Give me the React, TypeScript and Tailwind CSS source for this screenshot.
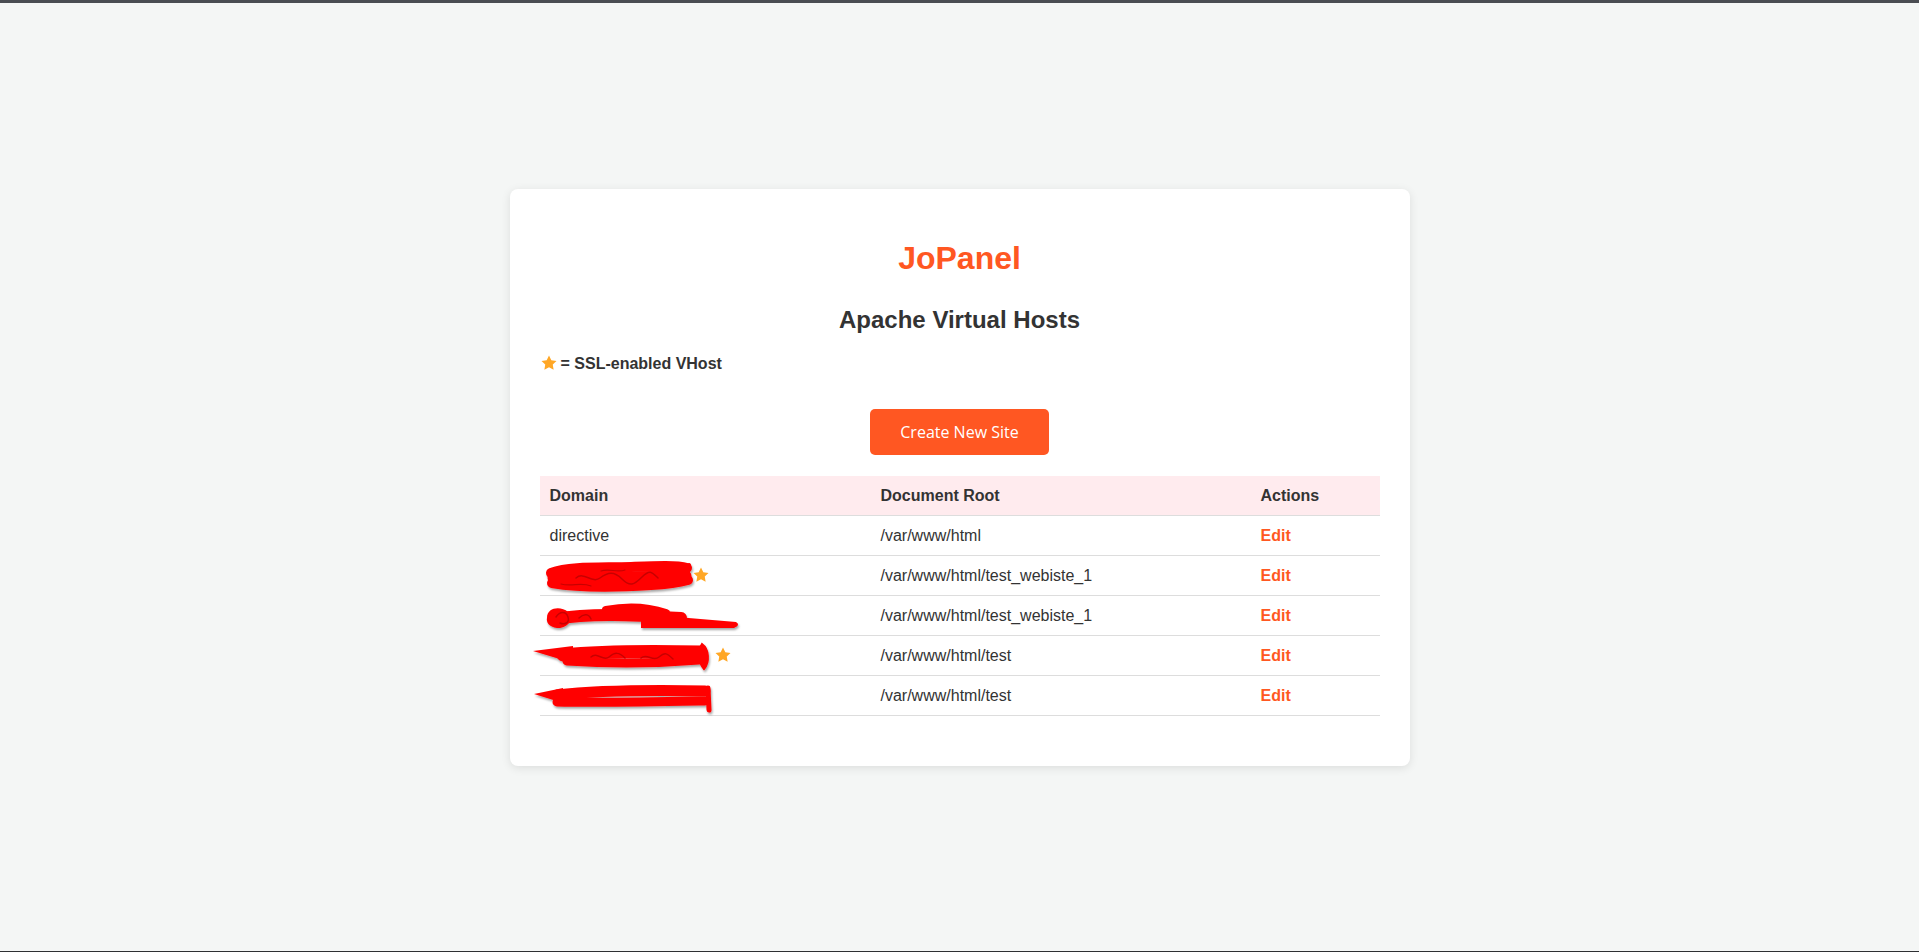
import React from 'react'

interface VHost {
  domain: string
  root: string
  ssl: boolean
}

const vhosts: VHost[] = [
  { domain: 'directive', root: '/var/www/html', ssl: false },
  { domain: 'redacted-1', root: '/var/www/html/test_webiste_1', ssl: true },
  { domain: 'redacted-2', root: '/var/www/html/test_webiste_1', ssl: false },
  { domain: 'redacted-3', root: '/var/www/html/test', ssl: true },
  { domain: 'redacted-4', root: '/var/www/html/test', ssl: false },
]

function Star({ size = 18 }: { size?: number }) {
  return (
    <svg width={size} height={size} viewBox="0 0 24 24" className="shrink-0">
      <polygon
        points="12,2 15.09,8.26 22,9.27 17,14.14 18.18,21.02 12,17.77 5.82,21.02 7,14.14 2,9.27 8.91,8.26"
        fill="#ffa726"
      />
    </svg>
  )
}

// red marker scribbles hiding the domain names (drawn in page coordinates)
function Scribble({ row }: { row: number }) {
  const red = '#ff0000'
  const dark = '#c80000'
  const common = { fill: 'none', stroke: red, strokeLinecap: 'round' as const, strokeLinejoin: 'round' as const }
  const filter = (
    <defs>
      <filter id={`sh${row}`} x="-10%" y="-30%" width="120%" height="170%">
        <feDropShadow dx="1" dy="2" stdDeviation="1" floodColor="#000" floodOpacity="0.35" />
      </filter>
    </defs>
  )
  if (row === 1) {
    return (
      <svg className="absolute left-[1px] top-[4px] overflow-visible" width="155" height="36" viewBox="540 559 155 36">
        {filter}
        <g filter="url(#sh1)">
          <path d="M550 572 C570 565 600 567 630 566 C655 565 675 564 686 567" strokeWidth="10" {...common} />
          <path d="M551 582 C580 587 620 586 650 584 C670 583 680 581 687 579" strokeWidth="10" {...common} />
          <path d="M552 577 L685 575" strokeWidth="11" {...common} />
          <path d="M680 570 L688 564" strokeWidth="4" {...common} />
          <path d="M575 577 c8 -7 16 6 24 0 s14 -7 22 1 s12 6 20 -2 s10 -5 16 1" strokeWidth="1.5" {...common} stroke={dark} />
          <path d="M560 583 c10 3 20 -2 30 2 M600 570 c8 -3 16 2 24 -1" strokeWidth="1.2" {...common} stroke={dark} />
        </g>
      </svg>
    )
  }
  if (row === 2) {
    return (
      <svg className="absolute left-[1px] top-[4px] overflow-visible" width="200" height="34" viewBox="540 599 200 34">
        {filter}
        <g filter="url(#sh2)">
          <path d="M546 617 C546 606 560 605 567 611 C574 617 567 628 556 627 C548 626 545 621 546 617 Z" fill={red} />
          <path d="M554 618 C590 612 630 614 680 617" strokeWidth="12" {...common} />
          <path d="M605 609 C630 604 650 607 665 612" strokeWidth="8" {...common} />
          <path d="M640 613 L735 621 Q740 624 733 627 L640 627 Z" fill={red} />
          <path d="M555 616 c4 -6 10 -6 12 0 s-4 8 -8 6 M578 617 c5 -5 10 -4 12 1" strokeWidth="1.5" {...common} stroke={dark} />
        </g>
      </svg>
    )
  }
  if (row === 3) {
    return (
      <svg className="absolute left-[-9px] top-[5px] overflow-visible" width="185" height="32" viewBox="530 640 185 32">
        {filter}
        <g filter="url(#sh3)">
          <path d="M532 650 L572 645 L572 662 Z" fill={red} />
          <path d="M562 654 C600 650 650 650 700 651" strokeWidth="13" {...common} />
          <path d="M566 660 C610 663 650 663 698 659" strokeWidth="9" {...common} />
          <path d="M701 643 C708 648 709 661 703 668 C697 661 696 650 701 643 Z" fill={red} stroke={red} strokeWidth="2" />
          <path d="M590 656 c6 -6 12 5 18 0 s10 -5 16 1 M640 657 c6 -5 12 4 18 -1 s8 -4 14 2" strokeWidth="1.5" {...common} stroke={dark} />
        </g>
      </svg>
    )
  }
  return (
    <svg className="absolute left-[-9px] top-[7px] overflow-visible" width="185" height="32" viewBox="530 682 185 32">
      {filter}
      <g filter="url(#sh4)">
        <path d="M533 693 L562 687 L562 702 Z" fill={red} />
        <path d="M556 694 C600 689 650 689 704 690" strokeWidth="11" {...common} />
        <path d="M556 701 C600 702 650 701 704 700" strokeWidth="9" {...common} />
        <path d="M707 687 L708 709" strokeWidth="5" {...common} />
      </g>
    </svg>
  )
}

const scribbleWidths: Record<number, string> = {
  1: 'w-[140px]',
  2: 'w-[180px]',
  3: 'w-[162px]',
  4: 'w-[160px]',
}

export default function App() {
  return (
    <div className="min-h-screen flex flex-col bg-[#f4f6f5] font-['Liberation_Sans',Arial,sans-serif] text-[#333]">
      <div className="h-[3px] bg-[#4a4d52]" />
      <div className="flex-1 flex items-center justify-center">
        <div className="w-[900px] bg-white rounded-lg shadow-[0_2px_10px_rgba(0,0,0,0.1)] pt-[30px] px-[30px] pb-[50px]">
          <h1 className="mt-[21px] text-center text-[32px] leading-[37px] font-bold text-[#ff5722]">JoPanel</h1>
          <h2 className="mt-[29px] text-center text-[24px] leading-[28px] font-bold">Apache Virtual Hosts</h2>
          <p className="mt-[20px] flex items-center text-[16px] leading-[19px] font-bold">
            <Star />
            <span className="ml-[3px]">= SSL-enabled VHost</span>
          </p>
          <div className="mt-[36px] flex justify-center">
            <button className="h-[46px] px-[30px] rounded-[5px] bg-[#ff5722] text-white text-[16px] font-['Open_Sans',sans-serif]">
              Create New Site
            </button>
          </div>
          <table className="mt-[21px] w-full border-collapse text-[16px] leading-[19px]">
            <thead>
              <tr className="bg-[#ffebee] border-b border-[#ddd]">
                <th className="w-[331px] p-[10px] text-left font-bold">Domain</th>
                <th className="w-[380px] p-[10px] text-left font-bold">Document Root</th>
                <th className="p-[10px] text-left font-bold">Actions</th>
              </tr>
            </thead>
            <tbody>
              {vhosts.map((host, i) => (
                <tr key={i} className="border-b border-[#ddd]">
                  <td className="relative p-[10px]">
                    {i === 0 ? (
                      host.domain
                    ) : (
                      <>
                        <Scribble row={i} />
                        <div className="relative flex items-center h-[19px]">
                          <span className={`${scribbleWidths[i]} h-[19px]`} />
                          {host.ssl && (
                            <span className="ml-[2px]">
                              <Star />
                            </span>
                          )}
                        </div>
                      </>
                    )}
                  </td>
                  <td className="p-[10px]">{host.root}</td>
                  <td className="p-[10px]">
                    <a href="#" className="font-bold text-[#ff5722]">Edit</a>
                  </td>
                </tr>
              ))}
            </tbody>
          </table>
        </div>
      </div>
      <div className="h-px bg-[#2e3033]" />
    </div>
  )
}
